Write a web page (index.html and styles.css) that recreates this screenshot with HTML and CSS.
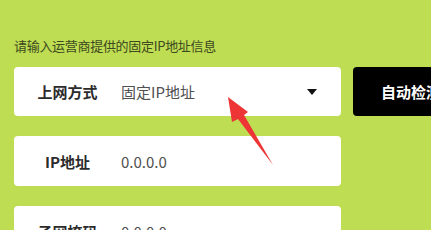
FILE: index.html
```html
<!DOCTYPE html>
<html lang="zh-CN">
<head>
<meta charset="utf-8">
<link rel="stylesheet" href="styles.css">
</head>
<body>
<div class="wrap">
  <div class="hint">请输入运营商提供的固定IP地址信息</div>
  <div class="rows">
    <div class="row">
      <div class="field">
        <span class="label">上网方式</span>
        <span class="value">固定IP地址</span>
        <span class="caret"></span>
      </div>
      <div class="btn">自动检测</div>
    </div>
    <div class="row">
      <div class="field tall">
        <span class="label">IP地址</span>
        <span class="value">0.0.0.0</span>
      </div>
    </div>
    <div class="row">
      <div class="field tall">
        <span class="label">子网掩码</span>
        <span class="value">0.0.0.0</span>
      </div>
    </div>
  </div>
</div>
<svg class="arrow" width="431" height="230" viewBox="0 0 431 230">
  <polygon points="228,97 248,112 244,115 273,165 238,119 232,122" fill="#ee3535"/>
</svg>
</body>
</html>
```
FILE: styles.css
```css
html, body {
  margin: 0;
  padding: 0;
}
body {
  width: 431px;
  height: 230px;
  overflow: hidden;
  background: #bedd52;
  font-family: "Noto Sans CJK SC", "Noto Sans", sans-serif;
  position: relative;
}
.wrap {
  padding: 38px 0 0 14px;
}
.hint {
  font-size: 13px;
  line-height: 16px;
  color: #3c4820;
  letter-spacing: -0.3px;
  margin-bottom: 13px;
}
.rows {
  display: flex;
  flex-direction: column;
  gap: 20px;
}
.row {
  display: flex;
  gap: 12px;
}
.field {
  width: 327px;
  height: 49px;
  flex-shrink: 0;
  background: #fff;
  border-radius: 4px;
  display: flex;
  align-items: center;
  font-size: 15px;
  position: relative;
}
.field.tall {
  height: 50px;
}
.label {
  width: 107px;
  text-align: center;
  font-weight: bold;
  color: #2b2b2b;
}
.value {
  color: #505050;
  flex: 1;
}
.caret {
  width: 0;
  height: 0;
  border-left: 5.5px solid transparent;
  border-right: 5.5px solid transparent;
  border-top: 6px solid #111;
  margin-right: 24px;
}
.btn {
  width: 100px;
  height: 49px;
  background: #000;
  border-radius: 4px;
  color: #fff;
  font-weight: bold;
  font-size: 15px;
  display: flex;
  align-items: center;
  padding-left: 28px;
  white-space: nowrap;
  box-sizing: border-box;
  flex-shrink: 0;
}
.arrow {
  position: absolute;
  left: 0;
  top: 0;
}
```
